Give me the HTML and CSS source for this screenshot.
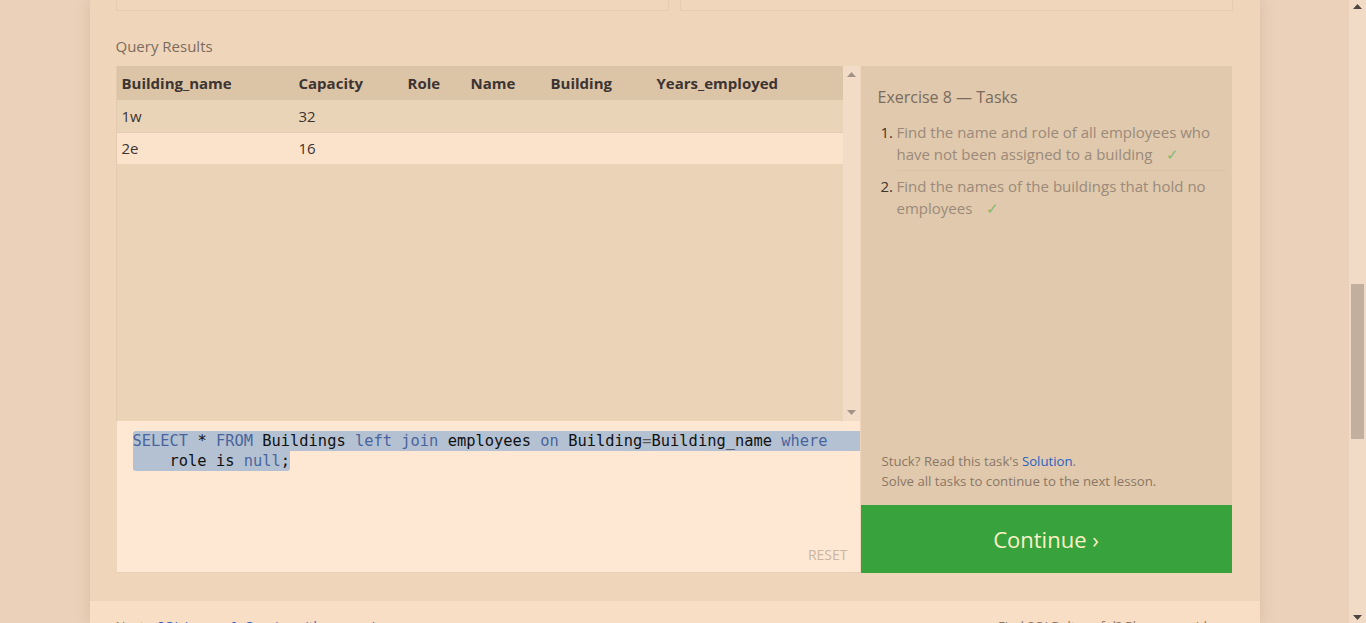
FILE: index.html
```html
<!DOCTYPE html>
<html lang="en">
<head>
<meta charset="utf-8">
<title>SQL Lesson 8</title>
<link rel="stylesheet" href="styles.css">
</head>
<body>
<div class="viewport">
  <div class="page">
    <div class="container">
      <div class="main">
        <div class="topboxes">
          <div class="topbox"></div>
          <div class="topbox"></div>
        </div>
        <h3 class="results-title">Query Results</h3>
        <div class="workspace">
          <div class="left">
            <div class="table-wrap">
              <div class="table-area">
                <table class="results">
                  <colgroup>
                    <col class="c1"><col class="c2"><col class="c3"><col class="c4"><col class="c5"><col>
                  </colgroup>
                  <thead>
                    <tr><th>Building_name</th><th>Capacity</th><th>Role</th><th>Name</th><th>Building</th><th>Years_employed</th></tr>
                  </thead>
                  <tbody>
                    <tr class="odd"><td>1w</td><td>32</td><td></td><td></td><td></td><td></td></tr>
                    <tr class="even"><td>2e</td><td>16</td><td></td><td></td><td></td><td></td></tr>
                  </tbody>
                </table>
              </div>
              <div class="tscroll">
                <svg class="arrow" width="9" height="5" viewBox="0 0 9 5"><polygon points="0,5 9,5 4.5,0" fill="#a39384"/></svg>
                <svg class="arrow" width="9" height="5" viewBox="0 0 9 5"><polygon points="0,0 9,0 4.5,5" fill="#a39384"/></svg>
              </div>
            </div>
            <div class="editor">
              <div class="code">
                <div class="line sel-full"><span class="kw">SELECT</span> * <span class="kw">FROM</span> Buildings <span class="kw">left</span> <span class="kw">join</span> employees <span class="kw">on</span> Building<span class="op">=</span>Building_name <span class="kw">where</span></div>
                <div class="line"><span class="sel-part">    role is <span class="kw">null</span>;</span></div>
              </div>
              <div class="reset">RESET</div>
            </div>
          </div>
          <div class="right">
            <div class="tasks">
              <h4 class="tasks-title">Exercise 8 — Tasks</h4>
              <ol class="task-list">
                <li><span class="num">1.</span><span class="ttext">Find the name and role of all employees who have not been assigned to a building <span class="check">✓</span></span></li>
                <li><span class="num">2.</span><span class="ttext last">Find the names of the buildings that hold no employees <span class="check">✓</span></span></li>
              </ol>
              <div class="stuck">
                <p>Stuck? Read this task's <span class="link">Solution</span>.</p>
                <p>Solve all tasks to continue to the next lesson.</p>
              </div>
            </div>
            <div class="continue">Continue ›</div>
          </div>
        </div>
      </div>
      <div class="footer">
        <span class="prev">Next – <span class="link">SQL Lesson 9: Queries with expressions</span></span>
        <span class="next">Find SQLBolt useful? Please consider</span>
      </div>
    </div>
  </div>
  <div class="vscroll">
    <svg class="arrow" width="9" height="5" viewBox="0 0 9 5"><polygon points="0,5 9,5 4.5,0" fill="#4f4440"/></svg>
    <div class="track"><div class="thumb"></div></div>
    <svg class="arrow" width="9" height="5" viewBox="0 0 9 5"><polygon points="0,0 9,0 4.5,5" fill="#4f4440"/></svg>
  </div>
</div>
</body>
</html>
```
FILE: styles.css
```css
* { box-sizing: border-box; }
html, body { margin: 0; padding: 0; }
body {
  background: #ebd1ba;
  font-family: "Open Sans", "Noto Sans", sans-serif;
  height: 623px;
  overflow: hidden;
}
.viewport { display: flex; height: 623px; }
.page {
  flex: 1;
  display: flex;
  justify-content: center;
  background: #ebd1ba;
}
.container {
  width: 1170px;
  box-shadow: 0 0 14px rgba(140, 95, 60, 0.18);
  display: flex;
  flex-direction: column;
}
.main {
  background: #efd6ba;
  padding: 0 27px 28px 26px;
  border-radius: 0 0 4px 4px;
}
.topboxes { display: flex; gap: 11px; height: 11px; }
.topbox {
  flex: 1;
  background: #f0d7bc;
  border: 1px solid #e6ccb1;
  border-top: none;
}
.results-title {
  margin: 25px 0 10px;
  font-size: 15px;
  line-height: 20px;
  font-weight: 400;
  color: #7d6c5e;
}
.workspace {
  display: grid;
  grid-template-columns: 744px 372px;
  height: 507px;
}
.left { display: flex; flex-direction: column; }
.table-wrap { display: flex; height: 355px; }
.table-area {
  flex: 1;
  background: #ead3b7;
  border-left: 1px solid #e4cbb0;
}
.results {
  width: 100%;
  border-collapse: collapse;
  table-layout: fixed;
  font-size: 15px;
  color: #3d3431;
}
.c1 { width: 177px; }
.c2 { width: 109px; }
.c3 { width: 63px; }
.c4 { width: 80px; }
.c5 { width: 106px; }
.results th {
  text-align: left;
  font-weight: 700;
  height: 34px;
  padding: 0 5px;
  background: #dcc4a7;
  white-space: nowrap;
}
.results td { height: 32px; padding: 0 5px; }
.results tr.odd td { background: #ead4b8; border-bottom: 1px solid #e6c9b6; }
.results tr.even td { background: #fae2cb; }
.tscroll {
  width: 17px;
  background: #f2dcc8;
  display: flex;
  flex-direction: column;
  justify-content: space-between;
  align-items: center;
  padding: 6px 0 6px;
}
.editor {
  height: 152px;
  background: #fee7d3;
  border-bottom: 1px solid #e8cfb7;
  border-left: 1px solid #ecd5bb;
  display: flex;
  flex-direction: column;
  padding: 10px 0 8px 16px;
}
.code {
  font-family: "DejaVu Sans Mono", "Liberation Mono", monospace;
  font-size: 15.4px;
  line-height: 20px;
  color: #111;
}
.line { white-space: pre; height: 20px; }
.kw { color: #4a659b; }
.op { color: #5a5a5a; }
.sel-full { background: #b3c1d3; border-radius: 3px 0 0 0; }
.sel-part { display: inline-block; background: #b3c1d3; border-radius: 0 0 3px 3px; }
.reset {
  margin-top: auto;
  align-self: flex-end;
  padding-right: 12px;
  font-size: 14px;
  line-height: 18px;
  color: #c9b6a3;
}
.right { display: flex; flex-direction: column; padding-left: 1px; }
.tasks {
  flex: 1;
  background: #e0c9ac;
  padding: 20px 7px 14px 17px;
  display: flex;
  flex-direction: column;
}
.tasks-title {
  margin: 0 0 13px;
  font-size: 16px;
  line-height: 22px;
  font-weight: 400;
  color: #7a6b5f;
}
.task-list { list-style: none; margin: 0; padding: 0 0 0 3px; }
.task-list li { display: flex; font-size: 15px; line-height: 22px; }
.num { width: 16px; flex: none; color: #3e3430; }
.ttext {
  flex: 1;
  color: #9b8a7b;
  padding-bottom: 5px;
  border-bottom: 1px solid #d9c2a5;
}
.ttext.last { border-bottom: none; padding-top: 4px; }
.task-list li:last-child .num { padding-top: 4px; }
.check { color: #7fba72; margin-left: 10px; }
.stuck { margin-top: auto; padding-left: 4px; }
.stuck p {
  margin: 0;
  font-size: 13.2px;
  line-height: 20px;
  color: #8b7767;
}
.link { color: #2b62c2; }
.continue {
  height: 68px;
  background: #38a33d;
  color: #fbf1c8;
  font-size: 22px;
  display: flex;
  align-items: center;
  justify-content: center;
}
.footer {
  flex: 1;
  background: #f8dec5;
  display: flex;
  justify-content: space-between;
  padding: 15px 40px 0 26px;
  font-size: 13px;
  line-height: 20px;
  color: #8b7767;
}
.vscroll {
  width: 17px;
  background: #f1dbc6;
  display: flex;
  flex-direction: column;
  align-items: center;
  padding: 4px 0 3px;
}
.vscroll .track { flex: 1; width: 100%; padding: 275px 2px 0; }
.thumb { height: 155px; background: #c3af9e; }
```
